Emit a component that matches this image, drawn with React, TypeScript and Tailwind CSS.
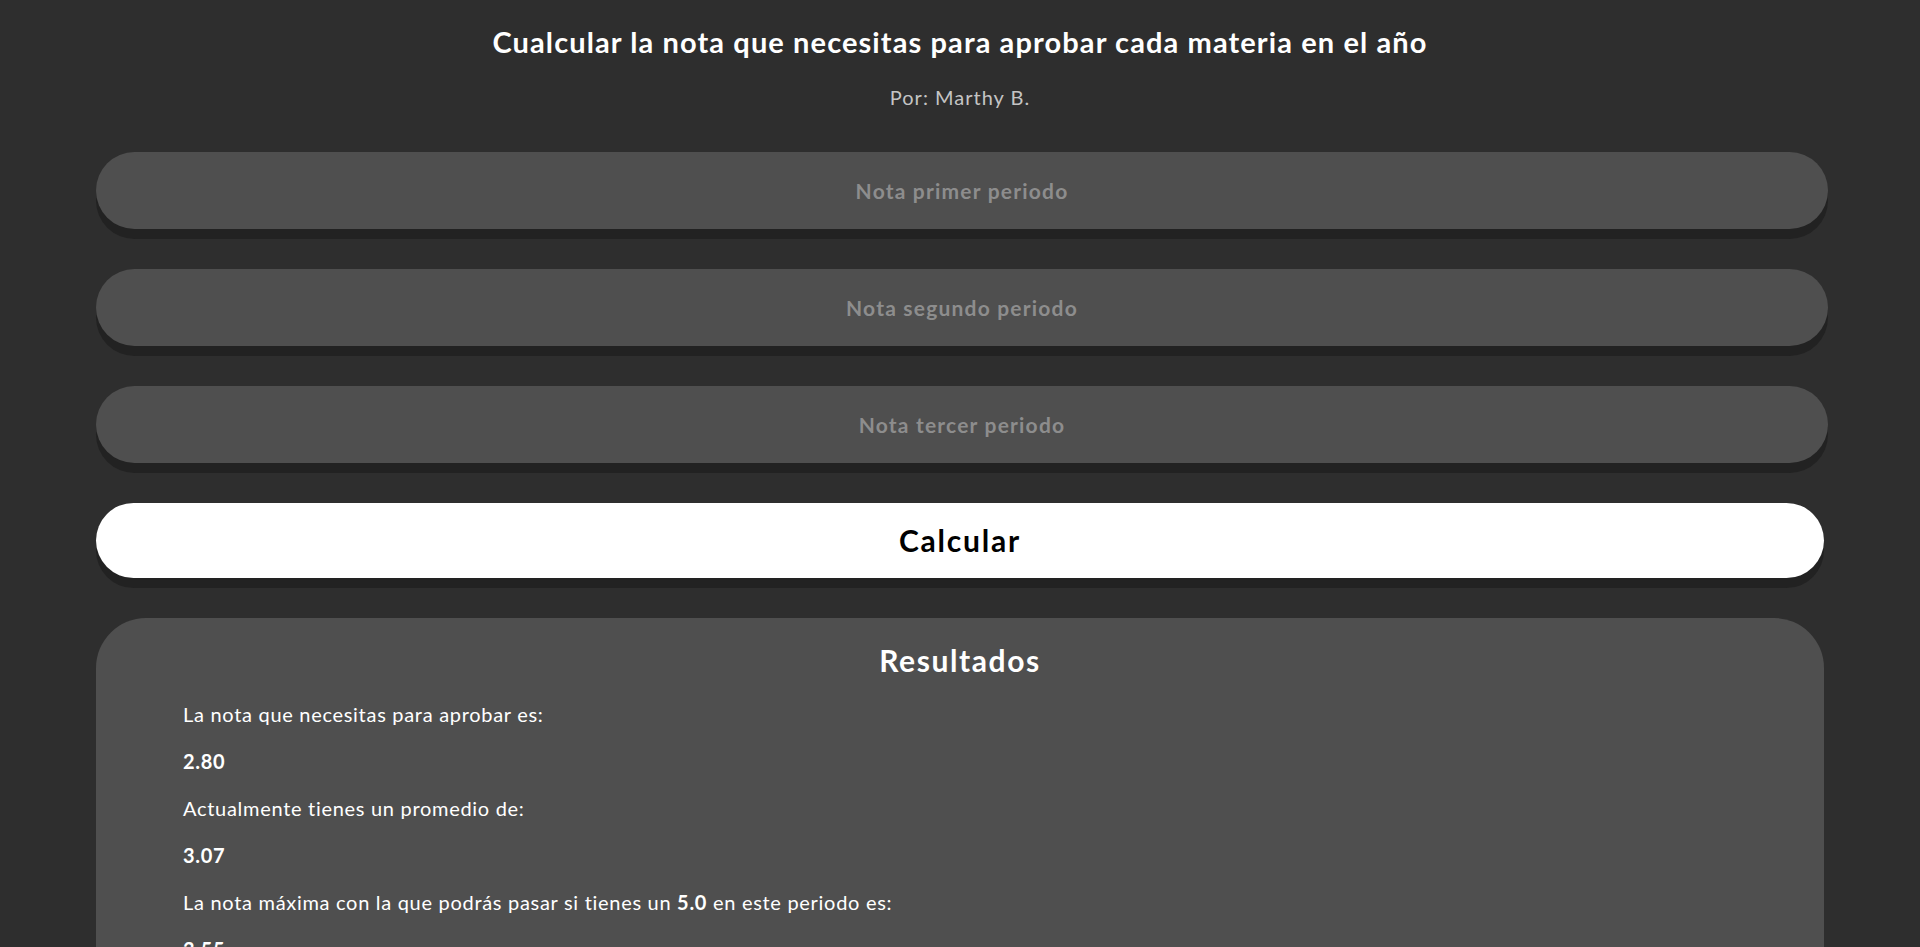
const inputs = ["Nota primer periodo", "Nota segundo periodo", "Nota tercer periodo"];

export default function App() {
  return (
    <div className="min-h-screen bg-[#2e2e2e] text-white font-['Lato','Open_Sans',sans-serif]">
      <h1 className="pt-[24px] text-center text-[29px] leading-[35px] font-bold tracking-[1.1px]">
        Cualcular la nota que necesitas para aprobar cada materia en el año
      </h1>
      <p className="mt-[26px] text-center text-[20px] leading-[24px] tracking-[1px] text-[#c4c4c4]">
        Por: Marthy B.
      </p>

      <div className="mt-[43px] mx-auto w-[90%] flex flex-col gap-10 items-start">
        {inputs.map((label) => (
          <input
            key={label}
            type="text"
            placeholder={label}
            className="w-[calc(100%+4px)] h-[77px] rounded-full bg-[#4f4f4f] shadow-[0_10px_0_#222222] text-center text-[21px] tracking-[1.2px] font-bold text-white placeholder:text-[#8d8d8d] outline-none"
          />
        ))}

        <button className="w-full h-[75px] rounded-full bg-white shadow-[0_10px_0_#222222] text-black text-[30px] tracking-[1.8px] font-bold">
          Calcular
        </button>

        <div className="w-full rounded-[50px] bg-[#4f4f4f] pt-[24px] pb-12 px-[87px]">
          <h2 className="text-center text-[30px] leading-[36px] tracking-[1.6px] font-bold">Resultados</h2>
          <div className="mt-[22px] flex flex-col gap-[19px] text-[20px] leading-[28px] tracking-[0.7px]">
            <p>La nota que necesitas para aprobar es:</p>
            <p className="font-bold">2.80</p>
            <p>Actualmente tienes un promedio de:</p>
            <p className="font-bold">3.07</p>
            <p>
              La nota máxima con la que podrás pasar si tienes un <b>5.0</b> en este periodo es:
            </p>
            <p className="font-bold">3.55</p>
          </div>
        </div>
      </div>
      <div className="h-10" />
    </div>
  );
}
